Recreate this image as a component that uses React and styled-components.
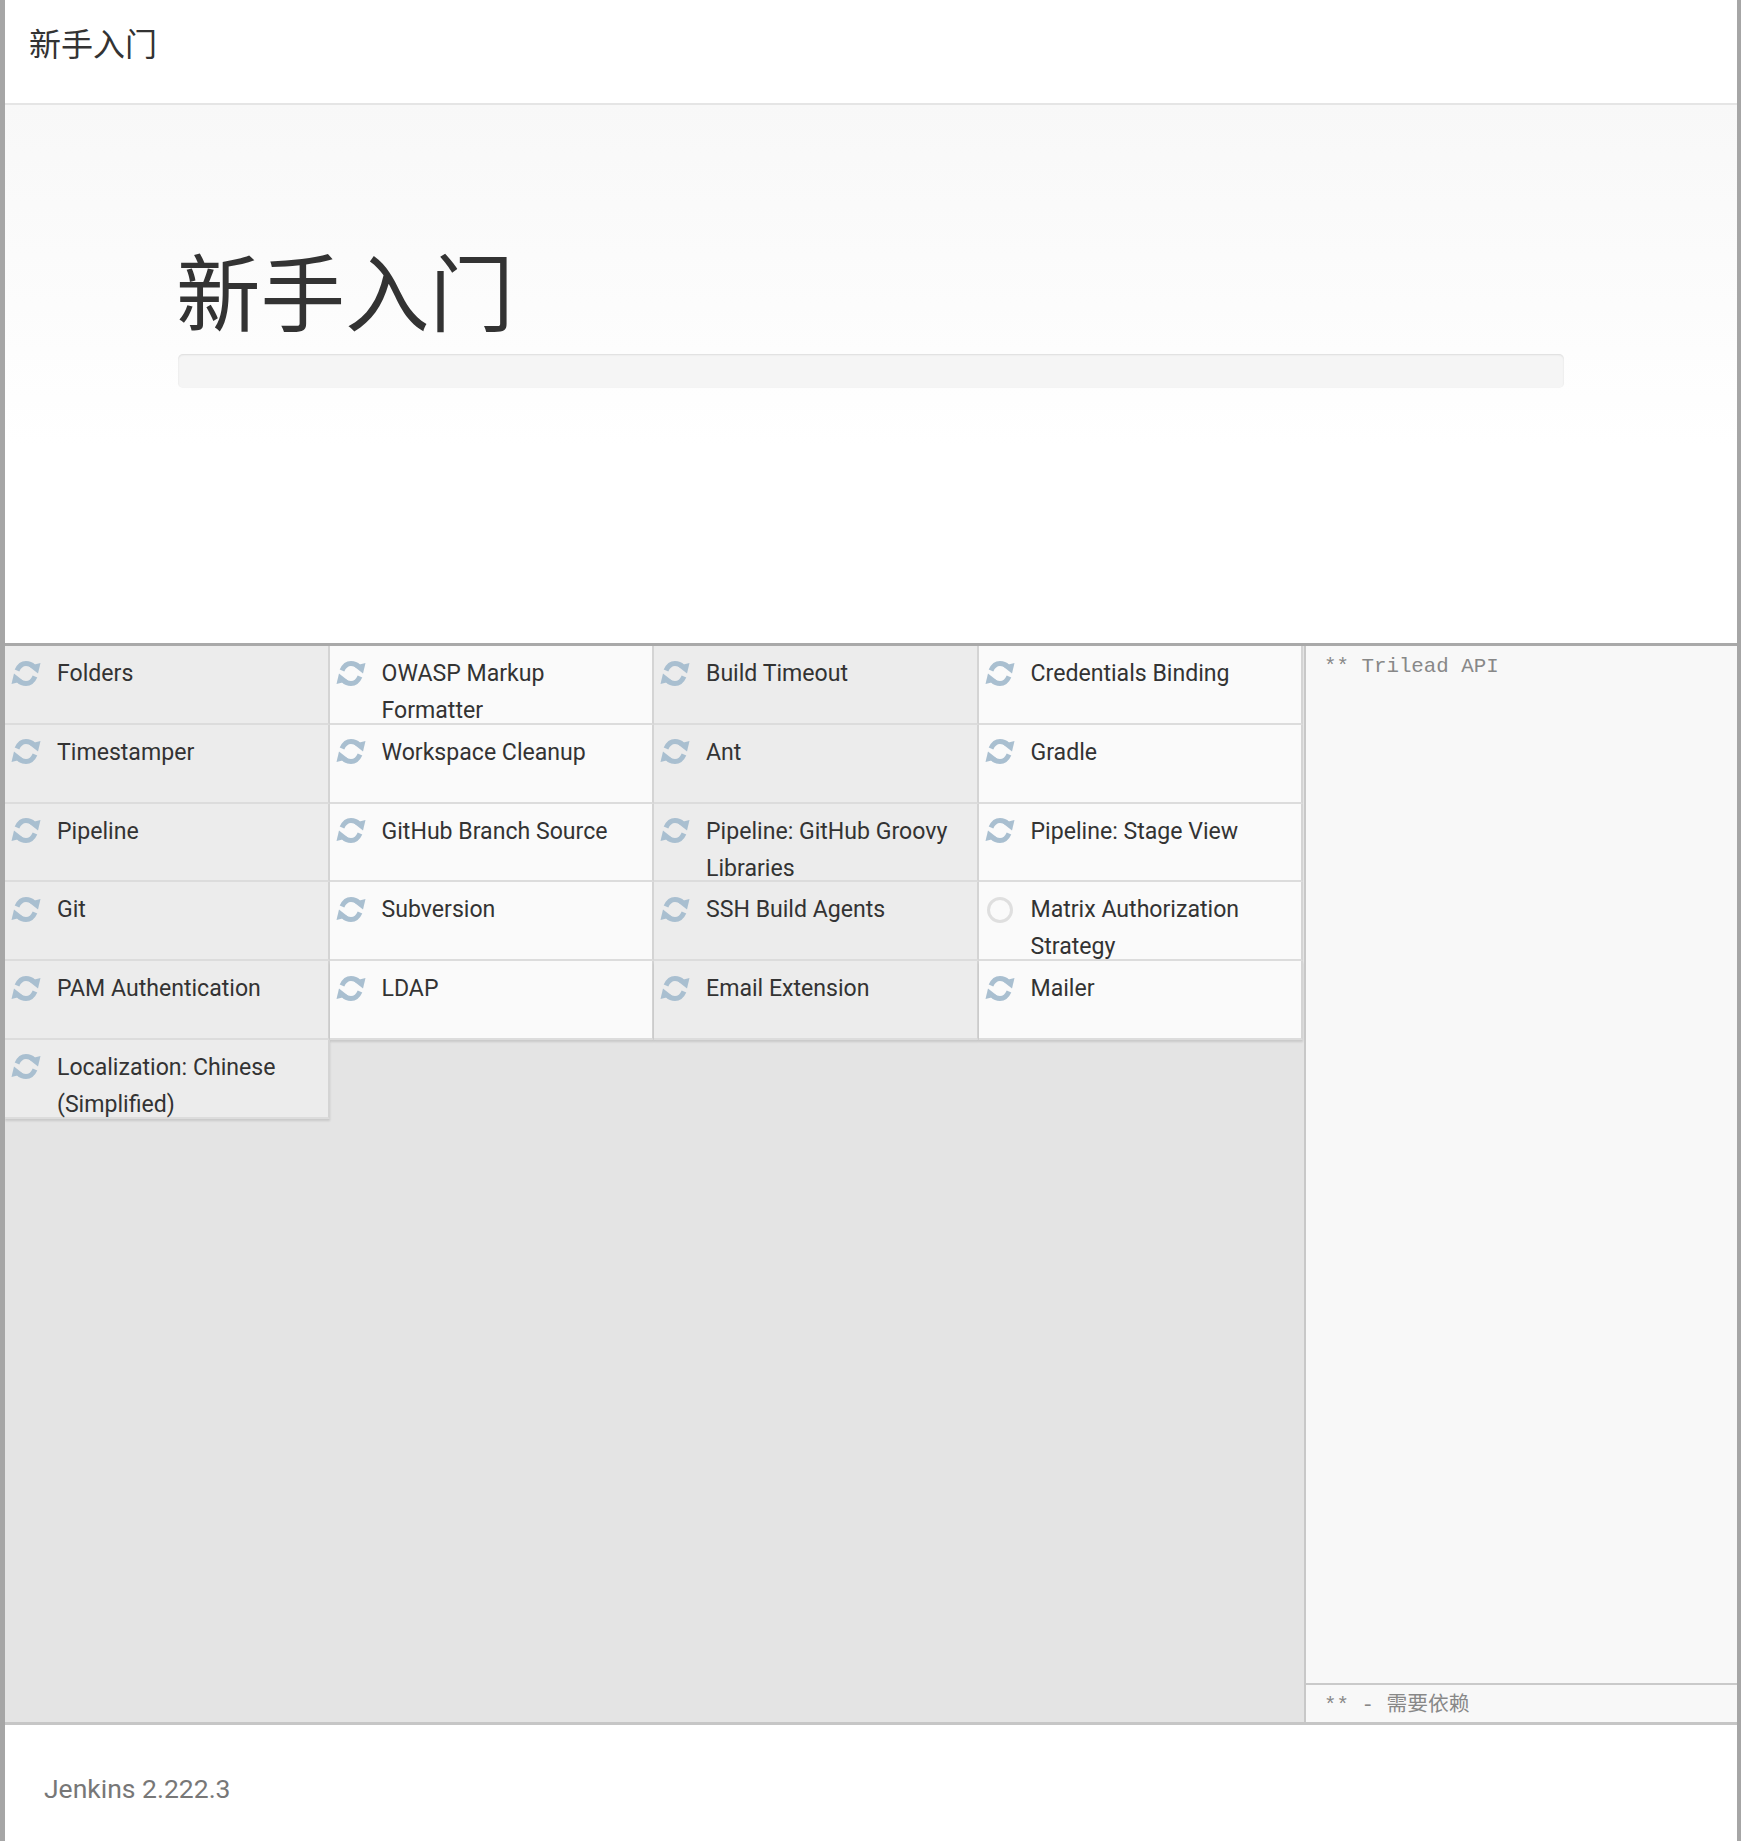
import React from 'react'
import styled, { createGlobalStyle } from 'styled-components'

const GlobalStyle = createGlobalStyle`
  html, body {
    margin: 0;
    padding: 0;
    background: #fff;
  }
`

const plugins = [
  { name: 'Folders' },
  { name: 'OWASP Markup Formatter' },
  { name: 'Build Timeout' },
  { name: 'Credentials Binding' },
  { name: 'Timestamper' },
  { name: 'Workspace Cleanup' },
  { name: 'Ant' },
  { name: 'Gradle' },
  { name: 'Pipeline' },
  { name: 'GitHub Branch Source' },
  { name: 'Pipeline: GitHub Groovy Libraries' },
  { name: 'Pipeline: Stage View' },
  { name: 'Git' },
  { name: 'Subversion' },
  { name: 'SSH Build Agents' },
  { name: 'Matrix Authorization Strategy', pending: true },
  { name: 'PAM Authentication' },
  { name: 'LDAP' },
  { name: 'Email Extension' },
  { name: 'Mailer' },
  { name: 'Localization: Chinese (Simplified)' },
]

const Page = styled.div`
  box-sizing: border-box;
  width: 1741px;
  height: 1841px;
  display: flex;
  flex-direction: column;
  border-left: 5px solid #a6a6a6;
  border-right: 4px solid #a6a6a6;
  font-family: Roboto, "Noto Sans CJK SC", sans-serif;
  color: #333;
  overflow: hidden;
`

const Header = styled.header`
  flex: 0 0 auto;
  height: 84px;
  display: flex;
  align-items: center;
  padding-left: 24px;
  padding-bottom: 19px;
  font-size: 32px;
  border-bottom: 2px solid #e5e5e5;
`

const Hero = styled.section`
  flex: 0 0 538px;
  box-sizing: border-box;
  padding: 146px 173px 0 173px;
  background: linear-gradient(to bottom, #f8f8f8 0, #fcfcfc 200px, #ffffff 340px);
`

const Title = styled.h1`
  margin: 0 0 0 -2px;
  font-size: 84.5px;
  font-weight: 400;
  line-height: 92px;
  color: #333;
`

const Progress = styled.div`
  box-sizing: border-box;
  height: 34px;
  margin-top: 11px;
  background: #f5f5f5;
  border-radius: 5px;
  box-shadow: inset 0 1px 2px rgba(0, 0, 0, 0.1);
`

const Main = styled.main`
  flex: 0 0 1082px;
  box-sizing: border-box;
  display: flex;
  border-top: 3px solid #a9a9a9;
  border-bottom: 3px solid #c6c6c6;
  background: #e4e4e4;
`

const PluginArea = styled.div`
  flex: 0 0 1299px;
  background: #e4e4e4;
`

const PluginGrid = styled.div`
  display: grid;
  grid-template-columns: repeat(4, 324.5px);
  grid-auto-rows: 78.8px;
`

const PluginCell = styled.div`
  box-sizing: border-box;
  display: flex;
  gap: 16px;
  padding: 9px 8px 0 6px;
  font-size: 23.1px;
  line-height: 37px;
  color: #333;
  background: ${({ $shaded }) => ($shaded ? '#ececec' : '#fafafa')};
  border-right: 2px solid #d4d4d4;
  border-bottom: 2px solid #dcdcdc;
  box-shadow: ${({ $last }) => ($last ? '0 2px 2px rgba(0, 0, 0, 0.12)' : 'none')};
`

const IconSlot = styled.div`
  flex: 0 0 30px;
  height: 37px;
  display: flex;
  align-items: center;
  justify-content: center;
`

const PendingDot = styled.span`
  box-sizing: border-box;
  width: 26px;
  height: 26px;
  border: 3px solid #dfdfdf;
  border-radius: 50%;
`

const LogPanel = styled.aside`
  flex: 1;
  display: flex;
  flex-direction: column;
  border-left: 2px solid #c8c8c8;
  background: #f8f8f8;
  font-family: "Liberation Mono", "Noto Sans CJK SC", monospace;
  font-size: 20.8px;
  color: #888;
`

const LogBody = styled.div`
  flex: 1;
  padding: 5px 18px;
  line-height: 32px;
`

const LogLegend = styled.div`
  flex: 0 0 34px;
  display: flex;
  align-items: center;
  padding-left: 18px;
  padding-bottom: 3px;
  border-top: 2px solid #cacaca;
`

const Footer = styled.footer`
  flex: 1;
  display: flex;
  align-items: center;
  padding-left: 39px;
  padding-top: 10px;
  font-size: 26.5px;
  color: #777;
`

// two arcs with the arrow heads pointing down on the right and up on the left
const RefreshIcon = () => (
  <svg width="30" height="28" viewBox="0 0 30 28">
    <g fill="none" stroke="#a9bfd0" strokeWidth="5">
      <path d="M6 10.5C8 6 11 3.5 15 3.5C18 3.5 20.5 4.5 22.5 6.5" />
      <path d="M24 16.5C22 21 19 23.5 15 23.5C12 23.5 9.5 22.5 7.5 20.5" />
    </g>
    <g fill="#a9bfd0">
      <polygon points="17.5,6 29.5,3 27,13.5" />
      <polygon points="12.5,21 0.5,24 3,13.5" />
    </g>
  </svg>
)

const App = () => (
  <Page>
    <GlobalStyle />
    <Header>新手入门</Header>
    <Hero>
      <Title>新手入门</Title>
      <Progress />
    </Hero>
    <Main>
      <PluginArea>
        <PluginGrid>
          {plugins.map((plugin, i) => (
            <PluginCell
              key={plugin.name}
              $shaded={i % 4 === 0 || i % 4 === 2}
              $last={i >= 16}
            >
              <IconSlot>{plugin.pending ? <PendingDot /> : <RefreshIcon />}</IconSlot>
              <span>{plugin.name}</span>
            </PluginCell>
          ))}
        </PluginGrid>
      </PluginArea>
      <LogPanel>
        <LogBody>** Trilead API</LogBody>
        <LogLegend>** - 需要依赖</LogLegend>
      </LogPanel>
    </Main>
    <Footer>Jenkins 2.222.3</Footer>
  </Page>
)

export default App
